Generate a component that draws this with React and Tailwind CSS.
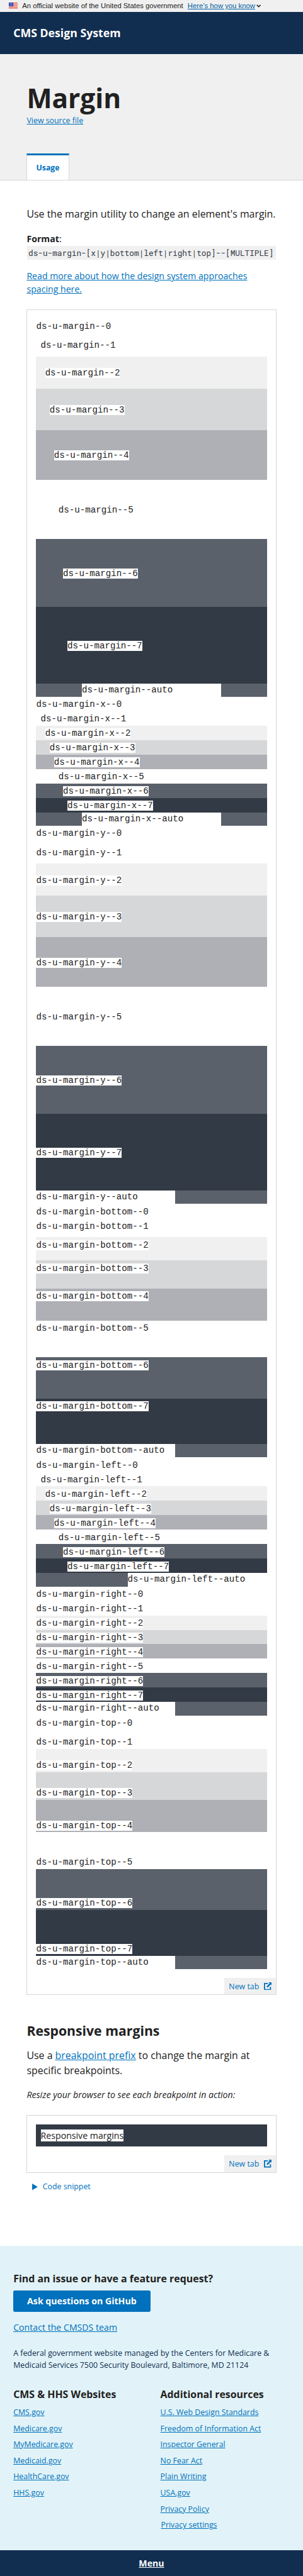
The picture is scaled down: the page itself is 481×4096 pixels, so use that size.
const LINK = "text-[#0071bc] underline";
const SHADES = [
  "bg-white",
  "bg-white",
  "bg-[#f0f0f0]",
  "bg-[#d6d7d9]",
  "bg-[#aeb0b5]",
  "bg-white",
  "bg-[#5b616b]",
  "bg-[#323a45]",
];
const LEFT = ["", "ml-[7.07px]", "ml-[14.15px]", "ml-[21.22px]", "ml-[28.29px]", "ml-[35.37px]", "ml-[42.44px]", "ml-[49.52px]"];
const TOP = ["", "pt-[7.076px]", "pt-[14.152px]", "pt-[21.228px]", "pt-[28.303px]", "pt-[35.379px]", "pt-[42.455px]", "pt-[49.531px]"];
const BOTTOM = ["", "pb-[7.076px]", "pb-[14.152px]", "pb-[21.228px]", "pb-[28.303px]", "pb-[35.379px]", "pb-[42.455px]", "pb-[49.531px]"];

const GROUPS = [
  { name: "margin", left: true, top: true, bottom: true, auto: "justify-center" },
  { name: "margin-x", left: true, auto: "justify-center" },
  { name: "margin-y", top: true, bottom: true, auto: "justify-start" },
  { name: "margin-bottom", bottom: true, auto: "justify-start" },
  { name: "margin-left", left: true, auto: "justify-end" },
  { name: "margin-right", auto: "justify-start" },
  { name: "margin-top", top: true, auto: "justify-start" },
];

function Group({ group }) {
  return (
    <>
      {SHADES.map((shade, n) => (
        <div key={n} className={`${shade} ${group.top ? TOP[n] : ""} ${group.bottom ? BOTTOM[n] : ""}`}>
          <div className="flex h-[22.996px] pt-[4.4px]">
            <span className={`h-[16px] bg-white leading-[16px] ${group.left ? LEFT[n] : ""}`}>
              ds-u-{group.name}--{n}
            </span>
          </div>
        </div>
      ))}
      <div className={`flex h-[21.228px] bg-[#5b616b] ${group.auto}`}>
        <div className="w-[221px] bg-white leading-[21.2px]">ds-u-{group.name}--auto</div>
      </div>
    </>
  );
}

function NewTab() {
  return (
    <div className="mt-[14.1px] flex justify-end">
      <a className="flex h-[26.6px] w-[81.4px] items-center gap-[7.4px] bg-[#f0f0f0] pl-[7.1px] text-[12.38px] text-[#0071bc]">
        New tab
        <svg className="size-[12.6px]" viewBox="0 0 14 14" fill="none">
          <path d="M7 2H1v11h10.500V8" stroke="#0071bc" strokeWidth="2" />
          <path d="M8 0h6v6l-2-2-5.500 5.500-2-2L10 2z" fill="#0071bc" />
        </svg>
      </a>
    </div>
  );
}

function Column({ title, links }) {
  return (
    <div className="flex w-[233.400px] flex-col">
      <h2 className="text-[15.92px] leading-[23.9px] font-bold">{title}</h2>
      <ul className="mt-[7.1px] flex flex-col gap-[7.05px] text-[12.38px] leading-[18.6px]">
        {links.map((l) => (
          <li key={l} className={l === "Privacy settings" ? "pl-[0.9px]" : ""}>
            <a className={LINK}>{l}</a>
          </li>
        ))}
      </ul>
    </div>
  );
}

export default function App() {
  return (
    <div className="flex h-[4096px] w-[481px] flex-col overflow-hidden bg-white font-['Open_Sans',sans-serif] text-[#212121]">
      <div className="flex h-[19.4px] shrink-0 items-center bg-[#f0f0f0] pl-[14.1px] font-['Liberation_Sans',sans-serif] text-[11.3px] text-[#1b1b1b]">
        <svg className="mb-[2px] h-[9.700px] w-[14.1px]" viewBox="0 0 16 11">
          <path fill="#fff" d="M0 0h16v11H0z" />
          <path stroke="#db3e1f" d="M0 .5h16M0 2.500h16M0 4.500h16M0 6.500h16M0 8.500h16M0 10.500h16" />
          <path fill="#1e33b1" d="M0 0h8v7H0z" />
          <path stroke="#fff" strokeDasharray="1 1" d="M1 1.500h6M2 3.500h5M1 5.500h6" />
        </svg>
        <span className="ml-[7.1px]">An official website of the United States government</span>
        <a className="ml-[7.1px] text-[#005ea2] underline">Here’s how you know</a>
        <svg className="ml-[2px] h-[5px] w-[7.5px]" viewBox="0 0 9 6" fill="none">
          <path d="M1 1l3.500 3.500L8 1" stroke="#1b1b1b" strokeWidth="1.9" />
        </svg>
      </div>
      <header className="flex h-[66.4px] shrink-0 items-center bg-[#112e51] pl-[21.2px] text-[17.69px] font-bold text-white">
        CMS Design System
      </header>
      <div className="flex h-[200.800px] shrink-0 flex-col items-start border-b border-[#d6d7d9] bg-[#f0f0f0] pt-[41.8px] pl-[42.45px]">
        <h1 className="text-[42.44px] leading-[55px] font-bold">Margin</h1>
        <a className={`mt-[0.5px] text-[12.38px] leading-[18.6px] ${LINK}`}>View source file</a>
        <div className="relative mt-[42.4px] h-[42.5px] w-[67.2px] border-x border-t-[3.5px] border-x-[#d6d7d9] border-t-[#0071bc] bg-white pt-[9px] text-center text-[12.38px] leading-[21.2px] font-bold text-[#0071bc]">
          Usage
        </div>
      </div>
      <main className="flex shrink-0 flex-col px-[42.4px] pt-[42px] text-[14.15px] leading-[21.2px]">
        <p className="text-[15.92px] leading-[23.9px] whitespace-nowrap">Use the margin utility to change an element's margin.</p>
        <p className="mt-[16.1px]">
          <b>Format</b>:
        </p>
        <code className="mx-[0.9px] mt-[1.1px] h-[22.1px] bg-[#f0f0f0] pl-[1.8px] font-['Roboto_Mono','Liberation_Mono',monospace] text-[12.73px] leading-[22.1px] whitespace-nowrap text-[#323a45]">
          ds-u-margin-[x|y|bottom|left|right|top]--[MULTIPLE]
        </code>
        <p className="mt-[15.3px]">
          <a className={LINK}>Read more about how the design system approaches spacing here.</a>
        </p>
        <section className="mt-[21.1px] border border-[#d6d7d9]">
          <div className="mx-[14.1px] mt-[14px] font-['Liberation_Mono',monospace] text-[14.15px]">
            {GROUPS.map((g) => (
              <Group key={g.name} group={g} />
            ))}
          </div>
          <NewTab />
        </section>
        <h2 className="mt-[42.5px] text-[21.22px] leading-[27.6px] font-bold">Responsive margins</h2>
        <p className="mt-[14.1px] text-[15.92px] leading-[23.9px]">
          Use a <a className={LINK}>breakpoint prefix</a> to change the margin at specific breakpoints.
        </p>
        <p className="mt-[15.4px] italic">Resize your browser to see each breakpoint in action:</p>
        <section className="mt-[21.5px] border border-[#d6d7d9]">
          <div className="mx-[14.1px] mt-[14px] flex h-[35.4px] items-center bg-[#323a45] pl-[7.1px]">
            <span className="bg-white leading-[19.5px]">Responsive margins</span>
          </div>
          <NewTab />
        </section>
        <div className="mt-[13.4px] flex items-center gap-[7.5px] pl-[8.9px] text-[12.38px] leading-[18.6px] text-[#0071bc]">
          <svg className="h-[10.6px] w-[8.9px]" viewBox="0 0 10 12">
            <path d="M0 0l10 6-10 6z" fill="#0071bc" />
          </svg>
          Code snippet
        </div>
      </main>
      <footer className="mt-[84.8px] flex flex-1 flex-col items-start bg-[#e1f3f8] px-[21.2px] pt-[40.3px]">
        <h2 className="text-[15.92px] leading-[23.9px] font-bold">Find an issue or have a feature request?</h2>
        <a className="mt-[6.6px] h-[33.6px] w-[217.4px] rounded-[2.65px] bg-[#0071bc] text-center text-[14.15px] leading-[33.6px] font-bold text-white">
          Ask questions on GitHub
        </a>
        <a className={`mt-[14.4px] text-[14.15px] leading-[21.2px] ${LINK}`}>Contact the CMSDS team</a>
        <p className="mt-[21.5px] text-[12.38px] leading-[18.6px] text-[#112e51]">
          A federal government website managed by the Centers for Medicare & Medicaid Services 7500 Security Boulevard, Baltimore, MD 21124
        </p>
        <div className="mt-[25.8px] flex">
          <Column title="CMS & HHS Websites" links={["CMS.gov", "Medicare.gov", "MyMedicare.gov", "Medicaid.gov", "HealthCare.gov", "HHS.gov"]} />
          <Column
            title="Additional resources"
            links={[
              "U.S. Web Design Standards",
              "Freedom of Information Act",
              "Inspector General",
              "No Fear Act",
              "Plain Writing",
              "USA.gov",
              "Privacy Policy",
              "Privacy settings",
            ]}
          />
        </div>
      </footer>
      <nav className="flex h-[40.7px] shrink-0 items-center justify-center bg-[#112e51] text-[14.15px] font-bold text-white underline">Menu</nav>
    </div>
  );
}
